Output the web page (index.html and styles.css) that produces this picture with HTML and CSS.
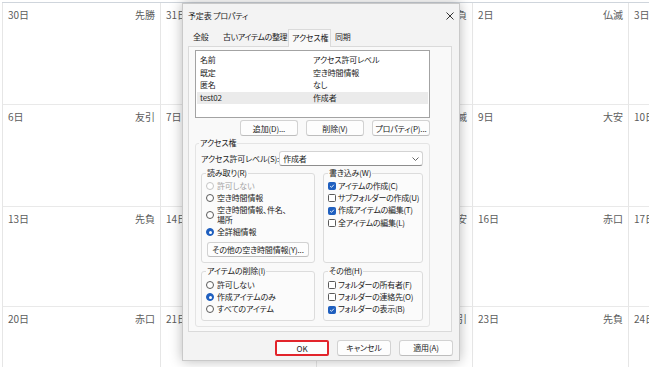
FILE: index.html
```html
<!DOCTYPE html>
<html lang="ja">
<head>
<meta charset="utf-8">
<link rel="stylesheet" href="styles.css">
</head>
<body>
<div class="calendar">
  <div class="cell"><span>30日</span><span>先勝</span></div>
  <div class="cell"><span>31日</span><span>友引</span></div>
  <div class="cell"><span>1日</span><span>先負</span></div>
  <div class="cell"><span>2日</span><span>仏滅</span></div>
  <div class="cell"><span>3日</span><span>大安</span></div>
  <div class="cell"><span>6日</span><span>友引</span></div>
  <div class="cell"><span>7日</span><span>先負</span></div>
  <div class="cell"><span>8日</span><span>仏滅</span></div>
  <div class="cell"><span>9日</span><span>大安</span></div>
  <div class="cell"><span>10日</span><span>赤口</span></div>
  <div class="cell"><span>13日</span><span>先負</span></div>
  <div class="cell"><span>14日</span><span>仏滅</span></div>
  <div class="cell"><span>15日</span><span>大安</span></div>
  <div class="cell"><span>16日</span><span>赤口</span></div>
  <div class="cell"><span>17日</span><span>先勝</span></div>
  <div class="cell"><span>20日</span><span>赤口</span></div>
  <div class="cell"><span>21日</span><span>先勝</span></div>
  <div class="cell"><span>22日</span><span>友引</span></div>
  <div class="cell"><span>23日</span><span>先負</span></div>
  <div class="cell"><span>24日</span><span>仏滅</span></div>
</div>

<div class="dialog">
  <div class="titlebar">
    <span>予定表 プロパティ</span>
    <svg class="close" width="8" height="8" viewBox="0 0 8 8"><path d="M0.5 0.5 7.5 7.5M7.5 0.5 0.5 7.5" stroke="#333" stroke-width="1"/></svg>
  </div>
  <div class="tabs">
    <span class="tab t1">全般</span>
    <span class="tab t2">古いアイテムの整理</span>
    <span class="tab t3 active">アクセス権</span>
    <span class="tab t4">同期</span>
  </div>
  <div class="panel">
    <div class="listbox">
      <div class="lrow head"><span class="c1">名前</span><span>アクセス許可レベル</span></div>
      <div class="lrow"><span class="c1">既定</span><span>空き時間情報</span></div>
      <div class="lrow"><span class="c1">匿名</span><span>なし</span></div>
      <div class="lrow sel"><span class="c1">test02</span><span>作成者</span></div>
    </div>
    <div class="btnrow">
      <button class="btn">追加(D)...</button>
      <button class="btn">削除(V)</button>
      <button class="btn">プロパティ(P)...</button>
    </div>
    <fieldset class="access">
      <legend>アクセス権</legend>
      <div class="level">
        <span class="lvl-label">アクセス許可レベル(S):</span>
        <div class="select"><span>作成者</span><svg width="7" height="4" viewBox="0 0 7 4"><path d="M0.5 0.5 3.5 3.5 6.5 0.5" fill="none" stroke="#555" stroke-width="0.9"/></svg></div>
      </div>
      <div class="groups">
        <fieldset class="grp">
          <legend>読み取り(R)</legend>
          <div class="opts">
            <div class="opt disabled"><span class="rb"></span><span>許可しない</span></div>
            <div class="opt"><span class="rb"></span><span>空き時間情報</span></div>
            <div class="opt two"><span class="rb"></span><span>空き時間情報、件名、<br>場所</span></div>
            <div class="opt"><span class="rb on"></span><span>全詳細情報</span></div>
          </div>
          <button class="btn more">その他の空き時間情報(Y)...</button>
        </fieldset>
        <fieldset class="grp">
          <legend>書き込み(W)</legend>
          <div class="opts checks">
            <div class="opt"><span class="cb on"><svg viewBox="0 0 8 8"><path d="M1.6 4.2 3.3 5.8 6.5 2.3" fill="none" stroke="#fff" stroke-width="1.2"/></svg></span><span>アイテムの作成(C)</span></div>
            <div class="opt"><span class="cb"></span><span>サブフォルダーの作成(U)</span></div>
            <div class="opt"><span class="cb on"><svg viewBox="0 0 8 8"><path d="M1.6 4.2 3.3 5.8 6.5 2.3" fill="none" stroke="#fff" stroke-width="1.2"/></svg></span><span>作成アイテムの編集(T)</span></div>
            <div class="opt"><span class="cb"></span><span>全アイテムの編集(L)</span></div>
          </div>
        </fieldset>
        <fieldset class="grp low">
          <legend>アイテムの削除(I)</legend>
          <div class="opts">
            <div class="opt"><span class="rb"></span><span>許可しない</span></div>
            <div class="opt"><span class="rb on"></span><span>作成アイテムのみ</span></div>
            <div class="opt"><span class="rb"></span><span>すべてのアイテム</span></div>
          </div>
        </fieldset>
        <fieldset class="grp low">
          <legend>その他(H)</legend>
          <div class="opts checks">
            <div class="opt"><span class="cb"></span><span>フォルダーの所有者(F)</span></div>
            <div class="opt"><span class="cb"></span><span>フォルダーの連絡先(O)</span></div>
            <div class="opt"><span class="cb on"><svg viewBox="0 0 8 8"><path d="M1.6 4.2 3.3 5.8 6.5 2.3" fill="none" stroke="#fff" stroke-width="1.2"/></svg></span><span>フォルダーの表示(B)</span></div>
          </div>
        </fieldset>
      </div>
    </fieldset>
  </div>
  <div class="footer">
    <button class="btn fbtn ok">OK</button>
    <button class="btn fbtn">キャンセル</button>
    <button class="btn fbtn">適用(A)</button>
  </div>
</div>
</body>
</html>
```

FILE: styles.css
```css
html, body {
  margin: 0;
  padding: 0;
}
body {
  width: 649px;
  height: 367px;
  overflow: hidden;
  background: #fff;
  font-family: "Noto Sans CJK JP", "Noto Sans", sans-serif;
  position: relative;
}

/* calendar background */
.calendar {
  display: grid;
  grid-template-columns: 158px repeat(4, 156px);
  grid-template-rows: 102px 102px 100px 102px;
  margin: 2px 0 0 2px;
  border-top: 1px solid #cfd5dc;
  width: max-content;
}
.cell {
  border-left: 1px solid #e6e6e6;
  border-bottom: 1px solid #e9e9e9;
  display: flex;
  justify-content: space-between;
  align-items: flex-start;
  padding: 5px 5px 0 5px;
  font-size: 10px;
  line-height: 14px;
  color: #5c5c5c;
}

/* dialog */
.dialog {
  position: absolute;
  left: 182px;
  top: 3px;
  width: 278px;
  height: 358px;
  box-sizing: border-box;
  background: #f3f3f3;
  border: 1px solid #c9c9c9;
  box-shadow: 0 0 12px rgba(0, 0, 0, 0.28);
  display: flex;
  flex-direction: column;
  font-size: 8px;
  letter-spacing: -0.15px;
  color: #1b1b1b;
  font-feature-settings: "palt";
  white-space: nowrap;
}
.titlebar {
  height: 23px;
  display: flex;
  align-items: center;
  justify-content: space-between;
  padding: 0 5px 0 5px;
}
.tabs {
  display: flex;
  height: 17px;
  margin-top: 2px;
  padding-left: 6px;
}
.tab {
  box-sizing: border-box;
  height: 17px;
  padding: 2px 0 0 4px;
  line-height: 12px;
}
.t1 { width: 30px; }
.t2 { width: 69px; letter-spacing: -0.4px; }
.t3 { width: 43px; }
.t4 { width: 30px; }
.tab.active {
  background: #f9f9f9;
  border: 1px solid #dadada;
  border-bottom: none;
  height: 18px;
  margin-bottom: -1px;
  padding-left: 3px;
  position: relative;
  z-index: 1;
}
.panel {
  margin: 0 7px 0 5px;
  background: #f9f9f9;
  border: 1px solid #dadada;
  padding: 3px 21px 4px 6px;
}
.listbox {
  height: 68px;
  box-sizing: border-box;
  border: 1px solid #a3a3a3;
  background: #fff;
  padding: 0 1px;
}
.lrow {
  display: flex;
  height: 12.5px;
  line-height: 12.5px;
  padding-left: 3px;
}
.lrow.head {
  margin-top: 2px;
  height: 13.5px;
  line-height: 13.5px;
}
.lrow.sel {
  background: #ebebeb;
}
.c1 {
  width: 113px;
}
.btnrow {
  display: flex;
  justify-content: flex-end;
  gap: 8px;
  margin-top: 2px;
}
.btn {
  font-family: inherit;
  font-size: 8px;
  letter-spacing: -0.15px;
  font-feature-settings: "palt";
  color: #1b1b1b;
  height: 16px;
  width: 58px;
  padding: 0;
  background: #fdfdfd;
  border: 1px solid #d2d2d2;
  border-bottom-color: #bdbdbd;
  border-radius: 3px;
  line-height: 13px;
  white-space: nowrap;
}

fieldset {
  margin: 0;
  min-width: 0;
}
legend {
  padding: 0 1px;
  line-height: 10px;
  height: 10px;
}
.access {
  margin-top: 2px;
  padding: 0 6px 5px 5px;
  border: 1px solid #e4e4e4;
  border-radius: 3px;
}
.access > legend {
  margin-left: -2px;
}
.level {
  display: flex;
  align-items: center;
  justify-content: space-between;
  height: 15px;
  margin-top: 3px;
}
.select {
  width: 144px;
  height: 15px;
  box-sizing: border-box;
  border: 1px solid #d3d3d3;
  border-bottom-color: #8d8d8d;
  border-radius: 3px;
  background: #fff;
  display: flex;
  align-items: center;
  justify-content: space-between;
  padding: 0 3px 0 3px;
}
.groups {
  display: grid;
  grid-template-columns: 114px 100px;
  column-gap: 8px;
  row-gap: 3px;
  margin-top: 2px;
}
.grp {
  padding: 0 4px 5px 4px;
  border: 1px solid #dcdcdc;
  border-radius: 3px;
  background: #fbfbfb;
}
.grp.low {
  padding-bottom: 4px;
}
.opts {
  padding-top: 2px;
}
.low .opts {
  padding-top: 3px;
}
.opt {
  display: flex;
  align-items: center;
  gap: 3px;
  height: 12px;
  line-height: 10.5px;
}
.checks .opt {
  height: 12.3px;
  letter-spacing: -0.3px;
}
.opt.two {
  height: 22px;
}
.opt.disabled {
  color: #a3a3a3;
}
.rb {
  width: 8px;
  height: 8px;
  box-sizing: border-box;
  border: 1px solid #5a5a5a;
  border-radius: 50%;
  background: #fff;
  flex: none;
  display: flex;
  align-items: center;
  justify-content: center;
}
.disabled .rb {
  border-color: #c4c4c4;
}
.rb.on {
  background: #1f5fbf;
  border-color: #1f5fbf;
}
.rb.on::after {
  content: "";
  width: 3px;
  height: 3px;
  border-radius: 50%;
  background: #fff;
}
.cb {
  width: 8px;
  height: 8px;
  box-sizing: border-box;
  border: 1px solid #5a5a5a;
  border-radius: 1.5px;
  background: #fff;
  flex: none;
  display: flex;
  align-items: center;
  justify-content: center;
}
.cb + span {
  margin-left: -1px;
}
.cb.on {
  background: #1f5fbf;
  border-color: #1f5fbf;
}
.cb svg {
  width: 6px;
  height: 6px;
}
.more {
  width: 102px;
  height: 15px;
  margin: 4px 0 0 1px;
  display: block;
}
.footer {
  display: flex;
  justify-content: flex-end;
  gap: 8px;
  margin-top: 8px;
  padding-right: 6px;
}
.fbtn {
  width: 54px;
  height: 16px;
}
.ok {
  border: 2px solid #e2242b;
  border-radius: 2px;
}
```
